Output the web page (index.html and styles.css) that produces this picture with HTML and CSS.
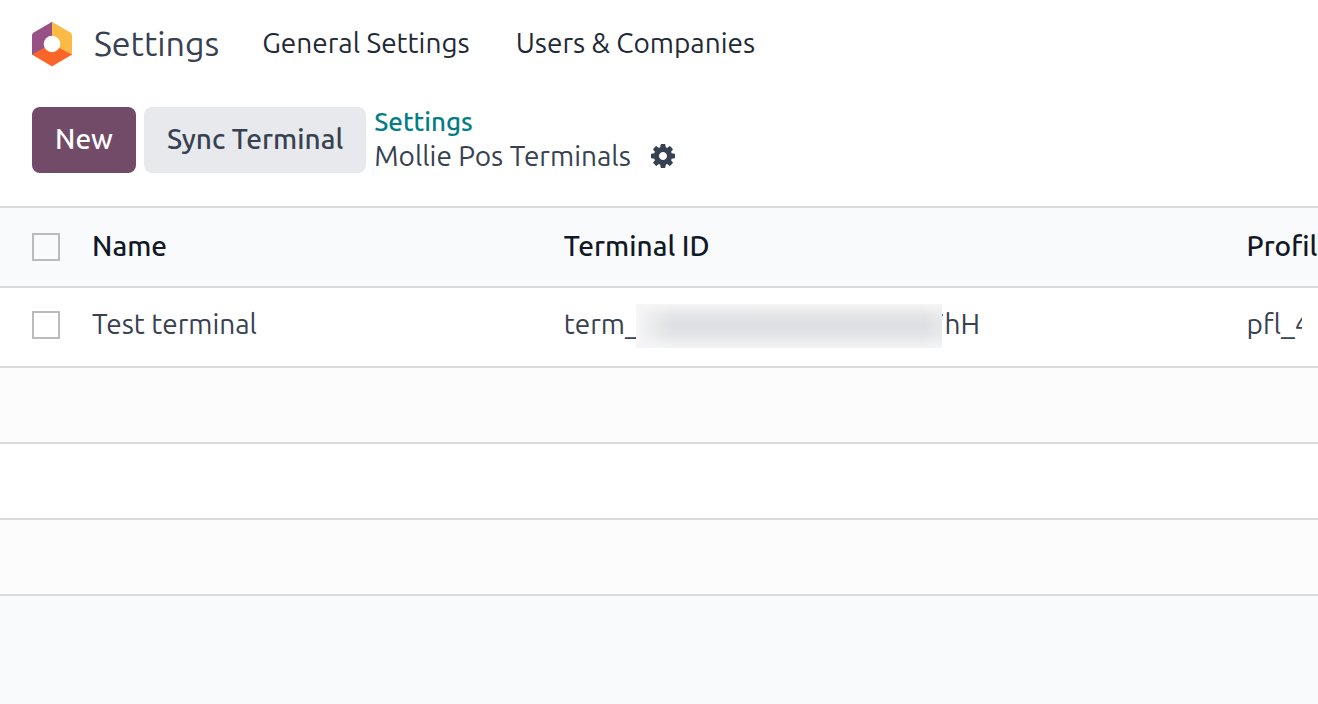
FILE: index.html
```html
<!DOCTYPE html>
<html lang="en">
<head>
<meta charset="utf-8">
<title>Settings - Mollie Pos Terminals</title>
<link rel="stylesheet" href="styles.css">
</head>
<body>
<header class="navbar">
  <a class="brand" href="#">
    <svg class="logo" viewBox="0 0 40 44" aria-hidden="true">
      <path fill="#985184" d="M20 0v22L0 33V13.500Q0 11.500 1.700 10.500L18.500.8Q19.200.2 20 0Z"/>
      <path fill="#fbb945" d="M20 0q.8.200 1.500.8L38.300 10.500Q40 11.500 40 13.500V33L20 22Z"/>
      <path fill="#fc6528" d="M20 22l20 10.500-1.500 1L21.500 43.500q-1.500 1-3 0L1.500 33.500 0 32.500Z"/>
      <circle cx="20" cy="22" r="8.300" fill="#fff"/>
    </svg>
    <span class="brand-name">Settings</span>
  </a>
  <nav class="menu">
    <a href="#">General Settings</a>
    <a href="#">Users &amp; Companies</a>
  </nav>
</header>
<section class="control-panel">
  <button class="btn btn-primary" type="button">New</button>
  <button class="btn btn-secondary" type="button">Sync Terminal</button>
  <div class="breadcrumb">
    <a class="parent" href="#">Settings</a>
    <div class="current">
      <span>Mollie Pos Terminals</span>
      <button class="gear" type="button" aria-label="Actions">
        <svg viewBox="0 128 1536 1536" aria-hidden="true">
          <path fill="#374151" d="M1024 896q0-106-75-181t-181-75-181 75-75 181 75 181 181 75 181-75 75-181zm512-109v222q0 12-8 23t-20 13l-185 28q-19 54-39 91 35 50 107 138 10 12 10 25t-9 23q-27 37-99 108t-94 71q-12 0-26-9l-138-108q-44 23-91 38-16 136-29 186-7 28-36 28h-222q-14 0-24.500-8.500t-11.500-21.500l-28-184q-49-16-90-37l-141 107q-10 9-25 9-14 0-25-11-126-114-165-168-7-10-7-23 0-12 8-23 15-21 51-66.500t54-70.500q-27-50-41-99l-183-27q-13-2-21-12.500t-8-23.500v-222q0-12 8-23t19-13l186-28q14-46 39-92-40-57-107-138-10-12-10-24 0-10 9-23 26-36 98.500-107.500t94.500-71.500q13 0 26 10l138 107q44-23 91-38 16-136 29-186 7-28 36-28h222q14 0 24.500 8.500t11.500 21.500l28 184q49 16 90 37l142-107q9-9 24-9 13 0 25 10 129 119 165 170 7 8 7 22 0 12-8 23-15 21-51 66.500t-54 70.500q26 50 41 98l183 28q13 2 21 12.500t8 23.500z"/>
        </svg>
      </button>
    </div>
  </div>
</section>
<main class="content">
  <table class="list">
    <colgroup><col class="col-check"><col class="col-name"><col class="col-terminal"><col></colgroup>
    <thead>
      <tr>
        <th class="check"><input type="checkbox" aria-label="Select all"></th>
        <th>Name</th>
        <th>Terminal ID</th>
        <th>Profile</th>
      </tr>
    </thead>
    <tbody>
      <tr class="record">
        <td class="check"><input type="checkbox" aria-label="Select Test terminal"></td>
        <td>Test terminal</td>
        <td><div class="terminal">term_<span class="redacted"></span>7hH</div></td>
        <td><div class="clip">pfl_4</div></td>
      </tr>
      <tr class="empty"><td colspan="4"></td></tr>
      <tr class="empty"><td colspan="4"></td></tr>
      <tr class="empty"><td colspan="4"></td></tr>
    </tbody>
  </table>
</main>
</body>
</html>
```
FILE: styles.css
```css
* {
  box-sizing: border-box;
}

body {
  margin: 0;
  min-height: 100vh;
  display: flex;
  flex-direction: column;
  overflow-x: hidden;
  background: #fff;
  color: #374151;
  font-family: Ubuntu, "Noto Sans", sans-serif;
  font-size: 28px;
  line-height: 34px;
}

a {
  color: inherit;
  text-decoration: none;
}

.navbar {
  display: flex;
  align-items: center;
  gap: 43px;
  height: 88px;
  padding: 0 32px;
  white-space: nowrap;
}

.brand {
  display: flex;
  align-items: center;
  gap: 22px;
  font-size: 34px;
}

.brand-name,
.menu {
  padding-bottom: 2px;
}

.logo {
  width: 40px;
  height: 44px;
}

.menu {
  display: flex;
  gap: 46px;
  color: #1f2937;
}

.control-panel {
  display: flex;
  align-items: center;
  gap: 8px;
  height: 118px;
  padding: 16px 32px 30px;
  white-space: nowrap;
}

.btn {
  height: 66px;
  padding: 0 23px 2px;
  border: 0;
  border-radius: 8px;
  font: inherit;
  font-weight: 500;
}

.btn-primary {
  background: #714b67;
  color: #fff;
}

.btn-secondary {
  background: #e7e9ed;
  color: #374151;
}

.breadcrumb {
  display: flex;
  flex-direction: column;
  padding-bottom: 2px;
}

.parent {
  color: #017e84;
  font-size: 26px;
  font-weight: 500;
}

.current {
  display: flex;
  align-items: center;
  gap: 20px;
}

.gear {
  display: flex;
  padding: 0;
  border: 0;
  background: none;
}

.gear svg {
  width: 24px;
  height: 24px;
}

.content {
  flex: 1;
  border-top: 2px solid #d8dadd;
  background: #f9fafb;
  overflow: hidden;
}

.list {
  width: 100%;
  table-layout: fixed;
  border-collapse: separate;
  border-spacing: 0;
}

.col-check {
  width: 76px;
}

.col-name {
  width: 35.8%;
}

.col-terminal {
  width: 51.8%;
}

.list th,
.list td {
  height: 80px;
  padding: 0 16px;
  border-bottom: 2px solid #d8dadd;
  text-align: left;
  white-space: nowrap;
}

.list th {
  padding-bottom: 2px;
  color: #111827;
  font-weight: 500;
}

.list td {
  background: #fff;
}

.list .record td {
  padding-bottom: 6px;
}

.list .check {
  padding-bottom: 0;
  padding-left: 32px;
}

.list .record .check {
  padding-bottom: 4px;
}

.list .empty td {
  height: 76px;
}

.list .empty:nth-child(even) td {
  background: #fcfcfc;
}

.check input {
  appearance: none;
  display: block;
  width: 28px;
  height: 28px;
  margin: 0;
  border: 2px solid #bbb;
}

.terminal {
  display: flex;
  align-items: center;
  height: 34px;
}

.redacted {
  position: relative;
  top: 2px;
  flex: none;
  width: 306px;
  height: 44px;
  margin-left: -3px;
  margin-right: -13px;
  background: linear-gradient(#f5f5f6, #e4e5e7 25%, #dddfe2 48%, #e3e4e6 70%, #f3f4f5);
}

.redacted::after {
  content: "";
  position: absolute;
  inset: 0;
  background: linear-gradient(90deg, #f6f6f7, #f6f6f799 4%, #f6f6f700 12%, #f6f6f700 94%, #f6f6f766);
}

.clip {
  overflow: hidden;
}
```
